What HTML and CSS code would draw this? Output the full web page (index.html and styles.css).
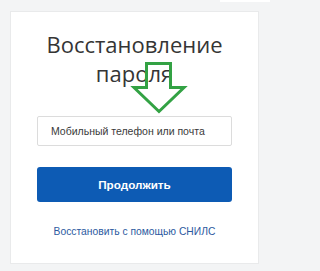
FILE: index.html
```html
<!DOCTYPE html>
<html lang="ru">
<head>
<meta charset="utf-8">
<link rel="stylesheet" href="styles.css">
</head>
<body>
<div class="topstrip"></div>
<main class="card">
  <h1 class="title">Восстановление пароля</h1>
  <div class="field"><span class="placeholder">Мобильный телефон или почта</span></div>
  <button class="btn">Продолжить</button>
  <a class="link" href="#">Восстановить с помощью СНИЛС</a>
  <svg class="arrow" width="270" height="271" viewBox="0 0 270 271">
    <path d="M146.5 63.5 H170.5 V87.5 H184 L159 111.5 L134 87.5 H146.5 Z" fill="none" stroke="#33a244" stroke-width="3" stroke-linejoin="miter"/>
  </svg>
</main>
</body>
</html>
```
FILE: styles.css
```css
html, body { margin: 0; padding: 0; }
body {
  width: 270px; height: 271px; overflow: hidden;
  background: #f3f4f5;
  font-family: "Liberation Sans", Arial, sans-serif;
  position: relative;
}
.topstrip {
  position: absolute; top: 0; right: 0; width: 50px; height: 2px; background: #fff;
}
.card {
  margin: 11px 0 0 10px;
  width: 247px; height: 251px;
  background: #fff;
  border: 1px solid #e9eaeb;
  display: flex; flex-direction: column; align-items: center;
  box-sizing: content-box;
}
.title {
  margin: 18px 0 0 0;
  width: 200px;
  text-align: center;
  font-family: "Open Sans", sans-serif;
  font-weight: 400;
  font-size: 22px;
  line-height: 29px;
  color: #353535;
}
.field {
  margin-top: 28px;
  width: 193px; height: 28px;
  border: 1px solid #dcdcdc;
  border-radius: 2px;
  display: flex; align-items: center;
  box-sizing: content-box;
}
.placeholder {
  padding-left: 13px;
  font-size: 10.5px;
  color: #3a3a3a;
}
.btn {
  margin-top: 21px;
  width: 195px; height: 35px;
  border: none; border-radius: 3px;
  background: #0d5bb4;
  color: #fff;
  font-family: "Liberation Sans", Arial, sans-serif;
  font-size: 11.7px; font-weight: 700;
  padding: 0;
}
.link {
  margin-top: 24px;
  font-size: 10.3px;
  line-height: 12px;
  color: #2c5aa0;
  text-decoration: none;
}
.arrow { position: absolute; left: 0; top: 0; pointer-events: none; }
```
